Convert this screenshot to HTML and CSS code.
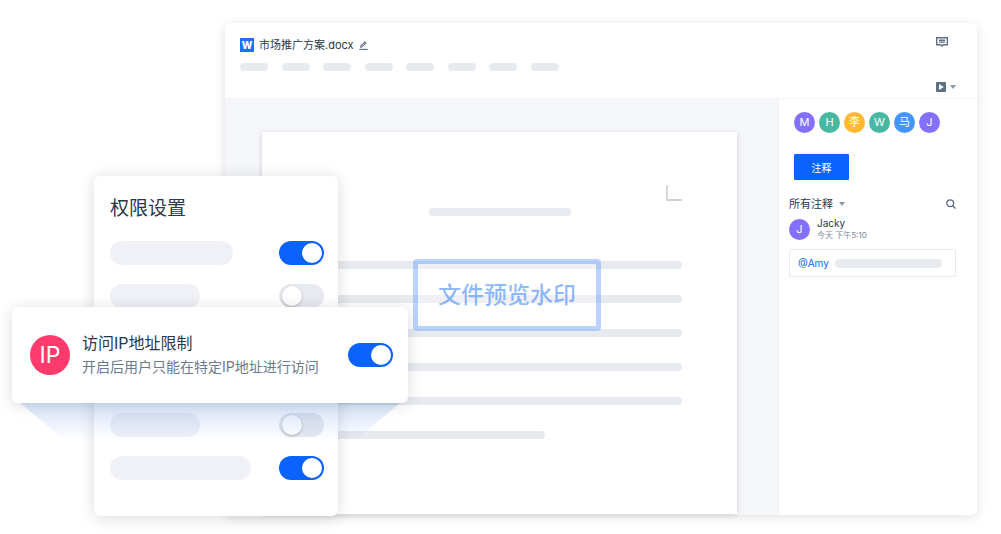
FILE: index.html
```html
<!DOCTYPE html>
<html lang="zh-CN">
<head>
  <meta charset="UTF-8">
  <meta name="viewport" content="width=device-width, initial-scale=1">
  <title>市场推广方案.docx</title>
  <link rel="stylesheet" href="styles.css">
</head>
<body>
  <div class="stage">
    <main class="editor">
      <header class="editor-header">
        <div class="header-main">
          <div class="file">
            <span class="file-logo">W</span>
            <span class="file-name">市场推广方案.docx</span>
            <button class="icon-btn" type="button" aria-label="重命名">
              <svg width="9" height="9" viewBox="0 0 9 9"><path d="M0.3 8.4h8.4" stroke="#5b6b80" stroke-width="1.1"/><path d="M1 7l0.5-2.4L5.9 0.2l1.7 1.7L3.3 6.3z" fill="#5b6b80"/><path d="M2.3 5.6l3.2-3.2" stroke="#fff" stroke-width="0.7"/></svg>
            </button>
          </div>
          <div class="menu">
            <span></span><span></span><span></span><span></span><span></span><span></span><span></span><span></span>
          </div>
        </div>
        <div class="header-tools">
          <button class="icon-btn" type="button" aria-label="评论">
            <svg width="12" height="10" viewBox="0 0 12 10"><path d="M0.7 0.7h10.6v7H7.4L6 9 4.6 7.7H0.7z" fill="none" stroke="#5f6f84" stroke-width="1.4"/><path d="M3 3.3h6M3 5.1h6" stroke="#5f6f84" stroke-width="1.4"/></svg>
          </button>
          <button class="icon-btn play" type="button" aria-label="播放">
            <svg width="10" height="10" viewBox="0 0 10 10"><rect width="10" height="10" rx="1" fill="#5f6f84"/><path d="M3 2v6L7.8 5z" fill="#fff"/></svg>
            <svg width="6" height="4" viewBox="0 0 6 4"><path d="M0 0h6L3 4z" fill="#8b97a6"/></svg>
          </button>
        </div>
      </header>

      <div class="editor-body">
        <div class="canvas">
          <article class="page">
            <div class="page-corner"></div>
            <div class="page-title"></div>
            <div class="page-lines">
              <span></span><span></span><span></span><span></span><span></span><span class="short"></span>
            </div>
            <div class="watermark">文件预览水印</div>
          </article>
        </div>

        <aside class="sidebar">
          <div class="members">
            <span class="avatar purple">M</span>
            <span class="avatar green">H</span>
            <span class="avatar yellow">李</span>
            <span class="avatar green">W</span>
            <span class="avatar blue">马</span>
            <span class="avatar purple">J</span>
          </div>
          <button class="comment-btn" type="button">注释</button>
          <div class="filter">
            <select class="filter-select" aria-label="筛选注释">
              <option>所有注释</option>
            </select>
            <svg width="6" height="4" viewBox="0 0 6 4"><path d="M0 0h6L3 4z" fill="#8b97a6"/></svg>
            <button class="icon-btn search" type="button" aria-label="搜索">
              <svg width="10" height="10" viewBox="0 0 10 10" fill="none" stroke="#5b6b80" stroke-width="1.3"><circle cx="4.2" cy="4.2" r="3.4"/><path d="M6.7 6.7l2.8 2.8"/></svg>
            </button>
          </div>
          <div class="comment">
            <span class="avatar purple">J</span>
            <div>
              <div class="comment-name">Jacky</div>
              <div class="comment-time">今天 下午5:10</div>
            </div>
          </div>
          <div class="comment-box">
            <a class="mention" href="#">@Amy</a>
            <span class="comment-line"></span>
          </div>
        </aside>
      </div>
    </main>

    <section class="settings">
      <h2>权限设置</h2>
      <div class="setting-rows">
        <div class="setting"><span class="pill medium"></span><input class="toggle" type="checkbox" aria-label="权限一" checked></div>
        <div class="setting"><span class="pill small"></span><input class="toggle" type="checkbox" aria-label="权限二"></div>
        <div class="setting"></div>
        <div class="setting"></div>
        <div class="setting"><span class="pill small"></span><input class="toggle" type="checkbox" aria-label="权限三"></div>
        <div class="setting"><span class="pill large"></span><input class="toggle" type="checkbox" aria-label="权限四" checked></div>
      </div>
    </section>

    <section class="ip-card">
      <span class="ip-badge">IP</span>
      <label class="ip-text" for="ip-limit">
        <span class="ip-title">访问IP地址限制</span>
        <span class="ip-desc">开启后用户只能在特定IP地址进行访问</span>
      </label>
      <input class="toggle" id="ip-limit" type="checkbox" checked>
      <div class="beam"></div>
    </section>
  </div>
</body>
</html>
```

FILE: styles.css
```css
* {
  box-sizing: border-box;
}

body {
  margin: 0;
  background: #fff;
  color: #2b3848;
  font-family: Inter, "Noto Sans CJK SC", sans-serif;
}

button,
select {
  font-family: inherit;
  border: 0;
  padding: 0;
  cursor: pointer;
}

.stage {
  position: relative;
  display: flex;
  min-height: 100vh;
  padding: 23px 24px 19px 225px;
}

/* editor window */
.editor {
  flex: 1;
  display: flex;
  flex-direction: column;
  background: #fff;
  border-radius: 6px;
  box-shadow: 0 2px 12px rgba(0, 0, 0, 0.12);
}

.editor-header {
  display: flex;
  justify-content: space-between;
  height: 76px;
  padding: 13px 21px 6px 15px;
  border-bottom: 1px solid #f3f4f6;
}

.file {
  display: flex;
  align-items: center;
  gap: 5px;
  height: 18px;
}

.file-logo {
  width: 14px;
  height: 14px;
  background: #1f6fff;
  color: #fff;
  font-size: 10px;
  font-weight: 800;
  line-height: 14px;
  text-align: center;
}

.file-name {
  font-size: 11px;
  line-height: 18px;
}

.icon-btn {
  display: flex;
  align-items: center;
  background: none;
}

.menu {
  display: flex;
  justify-content: space-between;
  width: 319px;
  margin-top: 9px;
}

.menu span {
  width: 28px;
  height: 8px;
  border-radius: 4px;
  background: #e7eaef;
}

.header-tools {
  display: flex;
  flex-direction: column;
  justify-content: space-between;
  align-items: flex-start;
  padding-top: 1px;
}

.play {
  gap: 4px;
}

.editor-body {
  flex: 1;
  display: flex;
}

.canvas {
  flex: 1;
  display: flex;
  padding: 33px 41px 1px 37px;
  background: #f5f6fa;
  border-right: 1px solid #eef0f4;
}

.page {
  position: relative;
  flex: 1;
  padding: 53px 55px 0;
  background: #fff;
  box-shadow: 0 1px 5px rgba(0, 0, 0, 0.16);
}

.page-corner {
  width: 16px;
  height: 16px;
  margin-left: auto;
  border-left: 2px solid #d5d9de;
  border-bottom: 2px solid #cdd2d8;
}

.page-title {
  width: 142px;
  height: 8px;
  margin: 7px auto 45px;
  border-radius: 4px;
  background: #e7eaef;
}

.page-lines {
  display: flex;
  flex-direction: column;
  gap: 26px;
}

.page-lines span {
  height: 8px;
  border-radius: 4px;
  background: #e7eaef;
}

.page-lines .short {
  width: 228px;
}

.watermark {
  position: absolute;
  top: 127px;
  left: 151px;
  padding: 18px 20px;
  border: 5px solid rgba(30, 110, 255, 0.3);
  border-radius: 4px;
  background: rgba(255, 255, 255, 0.3);
  color: rgba(30, 115, 255, 0.5);
  font-size: 23px;
  font-weight: 500;
  line-height: 26px;
  white-space: nowrap;
}

/* comments */
.sidebar {
  width: 198px;
  padding: 13px 21px 0 10px;
}

.members {
  display: flex;
  gap: 4px;
  padding-left: 5px;
}

.avatar {
  flex: none;
  width: 21px;
  height: 21px;
  border-radius: 50%;
  color: #fff;
  font-size: 11px;
  line-height: 21px;
  text-align: center;
}

.purple { background: #8470ff; }
.green { background: #49b8a2; }
.yellow { background: #ffb92e; }
.blue { background: #4595ff; }

.comment-btn {
  display: block;
  width: 55px;
  height: 26px;
  margin: 21px 0 0 5px;
  border-radius: 1px;
  background: #0b63ff;
  color: #fff;
  font-size: 10px;
}

.filter {
  display: flex;
  align-items: center;
  gap: 6px;
  height: 18px;
  margin-top: 15px;
}

.filter-select {
  appearance: none;
  background: none;
  color: #2b3848;
  font-size: 11px;
  line-height: 18px;
}

.search {
  margin-left: auto;
}

.comment {
  display: flex;
  align-items: center;
  gap: 7px;
  margin-top: 4px;
}

.comment-name {
  font-size: 10px;
  line-height: 12px;
}

.comment-time {
  color: #7b8898;
  font-size: 8px;
  line-height: 12px;
}

.comment-box {
  display: flex;
  align-items: center;
  gap: 6px;
  height: 28px;
  margin-top: 8px;
  padding: 0 13px 0 8px;
  border: 1px solid #e7eaef;
  border-radius: 2px;
}

.mention {
  color: #0b63ff;
  font-size: 10px;
  text-decoration: none;
}

.comment-line {
  flex: 1;
  height: 9px;
  border-radius: 5px;
  background: #e7eaef;
}

/* permission panel, over the editor */
.settings {
  position: absolute;
  top: 176px;
  left: 94px;
  width: 244px;
  padding: 18px 14px 36px 16px;
  background: #fff;
  border-radius: 6px;
  box-shadow: 0 2px 16px rgba(0, 0, 0, 0.14);
}

.settings h2 {
  margin: 0 0 18px;
  font-size: 19px;
  font-weight: 400;
  line-height: 29px;
}

.setting-rows {
  display: flex;
  flex-direction: column;
  gap: 19px;
}

.setting {
  display: flex;
  justify-content: space-between;
  height: 24px;
}

.pill {
  border-radius: 12px;
  background: #f0f1f6;
}

.small { width: 90px; }
.medium { width: 123px; }
.large { width: 141px; }

.toggle {
  appearance: none;
  flex: none;
  width: 45px;
  height: 24px;
  margin: 0;
  padding: 2px 2px 2px 3px;
  border-radius: 12px;
  background: #e7eaef;
  cursor: pointer;
}

.toggle::before {
  content: "";
  display: block;
  width: 20px;
  height: 20px;
  border-radius: 50%;
  background: #fff;
  box-shadow: 0 1px 3px rgba(0, 0, 0, 0.25);
}

.toggle:checked {
  background: #0b63ff;
}

.toggle:checked::before {
  margin-left: auto;
  box-shadow: none;
}

/* highlighted setting */
.ip-card {
  position: absolute;
  top: 307px;
  left: 12px;
  display: flex;
  align-items: center;
  gap: 12px;
  width: 396px;
  padding: 24px 15px 24px 18px;
  background: #fff;
  border-radius: 6px;
  box-shadow: 0 2px 16px rgba(0, 0, 0, 0.14);
}

.ip-badge {
  width: 40px;
  height: 40px;
  border-radius: 50%;
  background: #ff3b6d;
  color: #fff;
  font-size: 23px;
  line-height: 40px;
  text-align: center;
}

.ip-text {
  flex: 1;
  display: flex;
  flex-direction: column;
}

.ip-title {
  font-size: 16px;
  line-height: 24px;
}

.ip-desc {
  color: #6b7a8c;
  font-size: 14px;
  line-height: 24px;
}

.beam {
  position: absolute;
  top: 100%;
  left: 8px;
  right: 8px;
  height: 38px;
  background: linear-gradient(rgba(30, 100, 220, 0.18), rgba(30, 100, 255, 0));
  clip-path: polygon(0 0, 100% 0, 88% 100%, 12% 100%);
  pointer-events: none;
}
```
